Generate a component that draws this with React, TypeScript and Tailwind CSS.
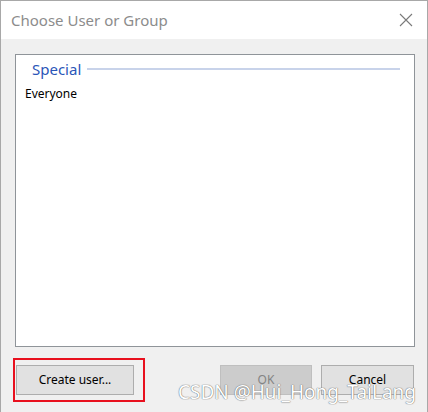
import React from 'react';

const font = { fontFamily: '"Segoe UI", "Noto Sans", "Open Sans", sans-serif' };

function CloseIcon() {
  return (
    <svg width="14" height="14" viewBox="0 0 14 14" className="block">
      <path d="M1 1 L13 13 M13 1 L1 13" stroke="#7a7a7a" strokeWidth="1.1" fill="none" />
    </svg>
  );
}

export default function App() {
  return (
    <div
      className="relative flex h-[412px] w-[428px] flex-col border-x border-t border-[#a8a8a8] bg-[#f0f0f0] text-black"
      style={font}
    >
      {/* title bar */}
      <div className="flex h-[38px] items-center justify-between bg-white pl-[10px] pr-[14px]">
        <div className="text-[15px] text-[#8c8c8c]">Choose User or Group</div>
        <CloseIcon />
      </div>

      <div className="flex flex-1 flex-col px-[14px] pt-[15px]">
        {/* list */}
        <div className="h-[293px] w-[400px] border border-[#8f9499] bg-white">
          <div className="flex items-center pl-[16px] pr-[14px] pt-[5px]">
            <span className="text-[15px] leading-[18px] text-[#2a56b8]">Special</span>
            <div className="ml-[6px] h-[2px] flex-1 bg-[#c8d3ea]" />
          </div>
          <div className="pl-[9px] pt-[8px] text-[12px] leading-[16px]">Everyone</div>
        </div>

        {/* buttons */}
        <div className="mt-[11px] flex items-start">
          <div className="ml-[-2px] border-2 border-[#e8101e] pb-[5px] pl-[1px] pr-[9px] pt-[5px]">
            <button
              type="button"
              className="h-[30px] w-[118px] border border-[#adadad] bg-[#e1e1e1] text-[12px]"
            >
              Create user...
            </button>
          </div>
          <div className="ml-auto mt-[7px] flex gap-[9px]">
            <button
              type="button"
              disabled
              className="h-[30px] w-[92px] border border-[#bfbfbf] bg-[#cccccc] text-[12px] text-[#838383]"
            >
              OK
            </button>
            <button
              type="button"
              className="mr-[-1px] h-[30px] w-[93px] border border-[#adadad] bg-[#e1e1e1] text-[12px]"
            >
              Cancel
            </button>
          </div>
        </div>
      </div>

      {/* watermark */}
      <div className="pointer-events-none absolute left-[177px] top-[380px] text-[19px] leading-[22px] text-white [text-shadow:0_0_1px_#6a6a6a,0_0_1px_#6a6a6a]">
        CSDN @Hui_Hong_TaiLang
      </div>
    </div>
  );
}
